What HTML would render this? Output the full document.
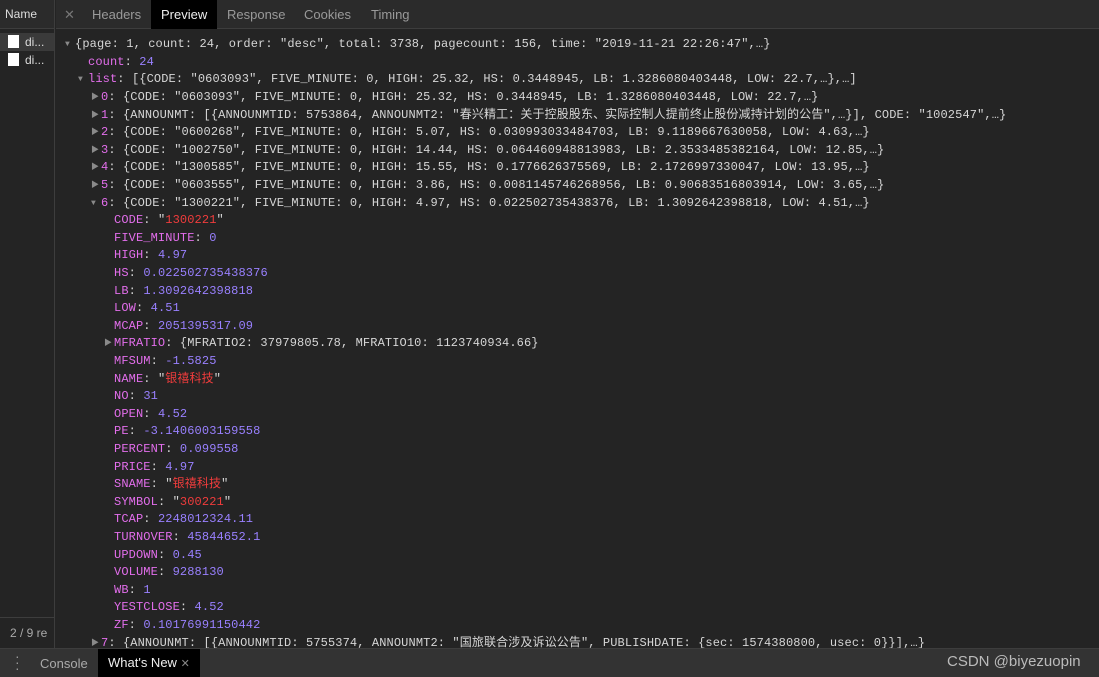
<!DOCTYPE html>
<html><head><meta charset="utf-8"><style>
*{margin:0;padding:0;box-sizing:border-box}
body{width:1099px;height:677px;background:#242424;overflow:hidden;position:relative;font-family:"Liberation Sans","Noto Sans CJK SC",sans-serif;color:#ccc}
.side{position:absolute;left:0;top:0;width:55px;height:648px;border-right:1px solid #3d3d3d;background:#242424}
.side .hd{height:29px;border-bottom:1px solid #3d3d3d;font-size:12px;color:#ddd;padding:7px 0 0 5px;background:#2b2b2b}
.side .it{height:18px;font-size:12px;color:#ddd;padding:2px 0 0 8px;position:relative}
.side .it i{display:inline-block;width:11px;height:13px;background:#fff;vertical-align:-2px;margin-right:6px}
.side .sel{background:#3a3a3a}
.side .ft{position:absolute;left:0;top:617px;width:55px;height:31px;border-top:1px solid #3d3d3d;font-size:12px;color:#aaa;padding:8px 0 0 10px;white-space:nowrap;overflow:hidden}
.tabs{position:absolute;left:56px;top:0;width:1043px;height:29px;background:#2b2b2b;border-bottom:1px solid #3d3d3d;font-size:13px;color:#9a9a9a}
.tabs span{position:absolute;top:7px}
.tabs .act{background:#000;color:#eee;top:0;height:29px;padding:7px 10px 0;left:95px}
.code{position:absolute;left:56px;top:31px;right:0;height:617px;font-family:"Liberation Mono","Noto Sans CJK SC",monospace;font-size:12px;letter-spacing:0.12px;color:#d6d6d6}
.l{position:absolute;height:17.6px;line-height:17.6px;white-space:pre}
.k{color:#e36eec}.n{color:#9980ff}.s{color:#f03c3c}
.t{color:#8a8a8a;font-size:8px;position:absolute;margin-left:-10px}
.bot{position:absolute;left:0;top:648px;width:1099px;height:29px;background:#333;border-top:1px solid #3d3d3d;font-size:13px;color:#aaa}
.bot span{position:absolute;top:7px}
</style></head><body>
<div class="side">
<div class="hd">Name</div>
<div style="height:4px"></div>
<div class="it sel"><i></i>di...</div>
<div class="it"><i></i>di...</div>
<div class="ft">2 / 9 re</div>
</div>
<div class="tabs">
<span style="left:8px;color:#777">✕</span>
<span style="left:36px">Headers</span>
<span class="act">Preview</span>
<span style="left:171px">Response</span>
<span style="left:248px">Cookies</span>
<span style="left:315px">Timing</span>
</div>
<div class="code">
<div class="l" style="top:5.2px;left:19px"><span class="t">▼</span>{page: 1, count: 24, order: "desc", total: 3738, pagecount: 156, time: "2019-11-21 22:26:47",…}</div>
<div class="l" style="top:22.8px;left:32px"><span class="k">count</span>: <span class="n">24</span></div>
<div class="l" style="top:40.4px;left:32px"><span class="t">▼</span><span class="k">list</span>: [{CODE: "0603093", FIVE_MINUTE: 0, HIGH: 25.32, HS: 0.3448945, LB: 1.3286080403448, LOW: 22.7,…},…]</div>
<div class="l" style="top:58px;left:45px"><span class="t">▶</span><span class="k">0</span>: {CODE: "0603093", FIVE_MINUTE: 0, HIGH: 25.32, HS: 0.3448945, LB: 1.3286080403448, LOW: 22.7,…}</div>
<div class="l" style="top:75.6px;left:45px"><span class="t">▶</span><span class="k">1</span>: {ANNOUNMT: [{ANNOUNMTID: 5753864, ANNOUNMT2: "春兴精工：关于控股股东、实际控制人提前终止股份减持计划的公告",…}], CODE: "1002547",…}</div>
<div class="l" style="top:93.2px;left:45px"><span class="t">▶</span><span class="k">2</span>: {CODE: "0600268", FIVE_MINUTE: 0, HIGH: 5.07, HS: 0.030993033484703, LB: 9.1189667630058, LOW: 4.63,…}</div>
<div class="l" style="top:110.8px;left:45px"><span class="t">▶</span><span class="k">3</span>: {CODE: "1002750", FIVE_MINUTE: 0, HIGH: 14.44, HS: 0.064460948813983, LB: 2.3533485382164, LOW: 12.85,…}</div>
<div class="l" style="top:128.4px;left:45px"><span class="t">▶</span><span class="k">4</span>: {CODE: "1300585", FIVE_MINUTE: 0, HIGH: 15.55, HS: 0.1776626375569, LB: 2.1726997330047, LOW: 13.95,…}</div>
<div class="l" style="top:146px;left:45px"><span class="t">▶</span><span class="k">5</span>: {CODE: "0603555", FIVE_MINUTE: 0, HIGH: 3.86, HS: 0.0081145746268956, LB: 0.90683516803914, LOW: 3.65,…}</div>
<div class="l" style="top:163.6px;left:45px"><span class="t">▼</span><span class="k">6</span>: {CODE: "1300221", FIVE_MINUTE: 0, HIGH: 4.97, HS: 0.022502735438376, LB: 1.3092642398818, LOW: 4.51,…}</div>
<div class="l" style="top:181.2px;left:58px"><span class="k">CODE</span>: "<span class="s">1300221</span>"</div>
<div class="l" style="top:198.8px;left:58px"><span class="k">FIVE_MINUTE</span>: <span class="n">0</span></div>
<div class="l" style="top:216.4px;left:58px"><span class="k">HIGH</span>: <span class="n">4.97</span></div>
<div class="l" style="top:234px;left:58px"><span class="k">HS</span>: <span class="n">0.022502735438376</span></div>
<div class="l" style="top:251.6px;left:58px"><span class="k">LB</span>: <span class="n">1.3092642398818</span></div>
<div class="l" style="top:269.2px;left:58px"><span class="k">LOW</span>: <span class="n">4.51</span></div>
<div class="l" style="top:286.8px;left:58px"><span class="k">MCAP</span>: <span class="n">2051395317.09</span></div>
<div class="l" style="top:304.4px;left:58px"><span class="t">▶</span><span class="k">MFRATIO</span>: {MFRATIO2: 37979805.78, MFRATIO10: 1123740934.66}</div>
<div class="l" style="top:322px;left:58px"><span class="k">MFSUM</span>: <span class="n">-1.5825</span></div>
<div class="l" style="top:339.6px;left:58px"><span class="k">NAME</span>: "<span class="s">银禧科技</span>"</div>
<div class="l" style="top:357.2px;left:58px"><span class="k">NO</span>: <span class="n">31</span></div>
<div class="l" style="top:374.8px;left:58px"><span class="k">OPEN</span>: <span class="n">4.52</span></div>
<div class="l" style="top:392.4px;left:58px"><span class="k">PE</span>: <span class="n">-3.1406003159558</span></div>
<div class="l" style="top:410px;left:58px"><span class="k">PERCENT</span>: <span class="n">0.099558</span></div>
<div class="l" style="top:427.6px;left:58px"><span class="k">PRICE</span>: <span class="n">4.97</span></div>
<div class="l" style="top:445.2px;left:58px"><span class="k">SNAME</span>: "<span class="s">银禧科技</span>"</div>
<div class="l" style="top:462.8px;left:58px"><span class="k">SYMBOL</span>: "<span class="s">300221</span>"</div>
<div class="l" style="top:480.4px;left:58px"><span class="k">TCAP</span>: <span class="n">2248012324.11</span></div>
<div class="l" style="top:498px;left:58px"><span class="k">TURNOVER</span>: <span class="n">45844652.1</span></div>
<div class="l" style="top:515.6px;left:58px"><span class="k">UPDOWN</span>: <span class="n">0.45</span></div>
<div class="l" style="top:533.2px;left:58px"><span class="k">VOLUME</span>: <span class="n">9288130</span></div>
<div class="l" style="top:550.8px;left:58px"><span class="k">WB</span>: <span class="n">1</span></div>
<div class="l" style="top:568.4px;left:58px"><span class="k">YESTCLOSE</span>: <span class="n">4.52</span></div>
<div class="l" style="top:586px;left:58px"><span class="k">ZF</span>: <span class="n">0.10176991150442</span></div>
<div class="l" style="top:603.6px;left:45px"><span class="t">▶</span><span class="k">7</span>: {ANNOUNMT: [{ANNOUNMTID: 5755374, ANNOUNMT2: "国旅联合涉及诉讼公告", PUBLISHDATE: {sec: 1574380800, usec: 0}}],…}</div>
</div>
<div class="bot">
<span style="left:15px;top:4px;color:#999;font-size:14px;line-height:6px">·<br>·<br>·</span>
<span style="left:40px">Console</span>
<span style="left:98px;top:0;height:28px;background:#000;color:#eee;padding:6px 10px 0">What's New <span style="position:static;color:#888;font-size:11px">✕</span></span>
<span style="left:947px;top:4px;color:#bbb;font-size:15px">CSDN @biyezuopin</span>
</div>
</body></html>
